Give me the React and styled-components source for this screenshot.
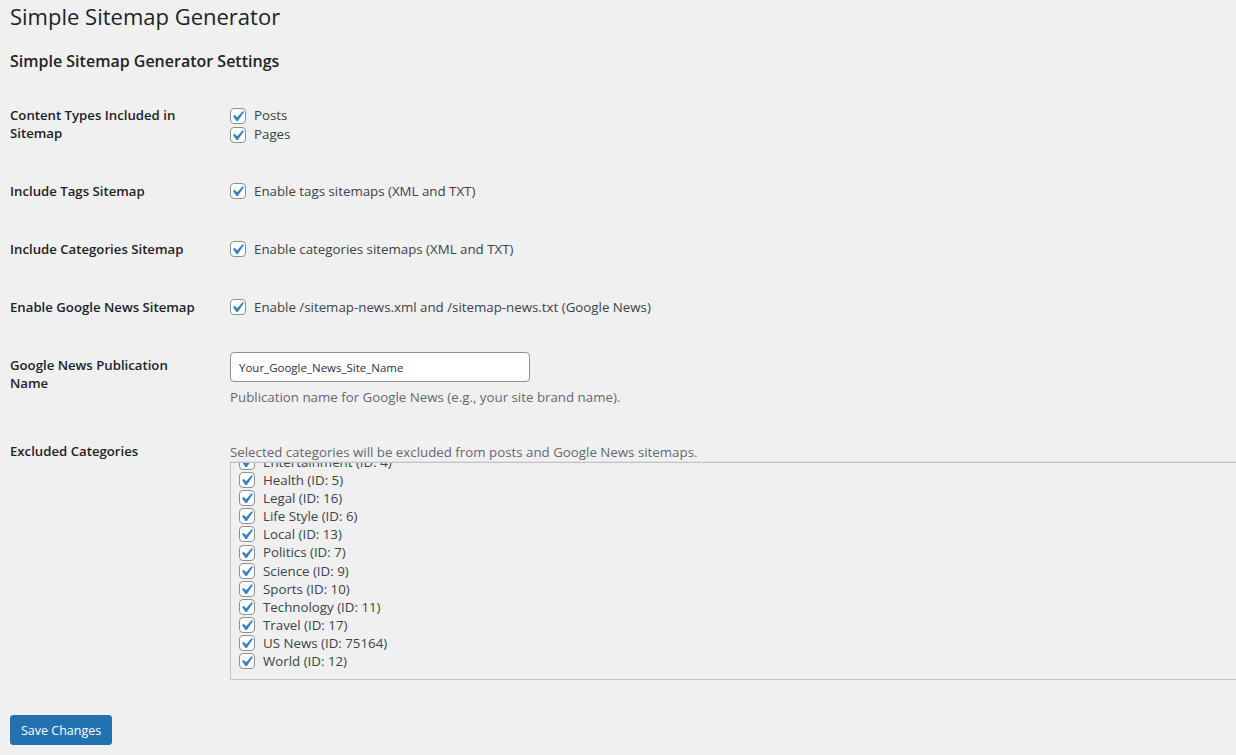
import React, { useEffect, useRef } from 'react';
import styled, { createGlobalStyle } from 'styled-components';

const GlobalStyle = createGlobalStyle`
  html, body {
    margin: 0;
    padding: 0;
    overflow: hidden;
    background: #f0f0f1;
  }
  body {
    font-family: "Open Sans", "Noto Sans", sans-serif;
    font-size: 13px;
    color: #3c434a;
  }
`;

const Wrap = styled.div`
  padding: 0 10px;
`;

const Title = styled.h1`
  margin: 0;
  padding-top: 1px;
  font-size: 22px;
  font-weight: 400;
  line-height: 30px;
  color: #1d2327;
`;

const Subtitle = styled.h2`
  margin: 18px 0 13px;
  font-size: 16px;
  font-weight: 600;
  line-height: 24px;
  color: #1d2327;
`;

const FormTable = styled.table`
  border-collapse: collapse;
  table-layout: fixed;
  width: 100%;
`;

const Th = styled.th`
  width: 195px;
  padding: 20px 15px 20px 0;
  text-align: left;
  vertical-align: top;
  font-size: 13.2px;
  font-weight: 600;
  line-height: 18px;
  color: #1d2327;
`;

const Td = styled.td`
  padding: ${(p) => p.$pad || '20px 10px'};
  vertical-align: top;
  line-height: 18px;
  font-size: 13.3px;
`;

const Choice = styled.label`
  display: flex;
  align-items: center;
  gap: 8px;
  line-height: ${(p) => p.$lh || '18px'};
  color: #3c434a;
  white-space: nowrap;
`;

const Box = styled.span`
  display: inline-flex;
  flex: none;
  width: 16px;
  height: 16px;
  box-sizing: border-box;
  border: 1px solid #8c8f94;
  border-radius: 4px;
  background: #fff;
  overflow: hidden;
`;

const TextInput = styled.input`
  display: block;
  box-sizing: border-box;
  width: 300px;
  height: 30px;
  margin: 1px 0 0;
  padding: 0 8px;
  border: 1px solid #8c8f94;
  border-radius: 4px;
  background: #fff;
  font-family: inherit;
  font-size: 11.5px;
  color: #2c3338;
  outline: none;
`;

const Description = styled.p`
  margin: ${(p) => p.$m || '0'};
  line-height: ${(p) => p.$lh || '18px'};
  color: #646970;
  white-space: nowrap;
`;

const CategoryBox = styled.div`
  box-sizing: border-box;
  width: 1040px;
  height: 218px;
  padding: 0 8px 10px;
  border: 1px solid #c3c4c7;
  box-shadow: 0 -1px 0 #e2e2e4;
  overflow-y: auto;
  scrollbar-width: none;
  &::-webkit-scrollbar {
    display: none;
  }
`;

const Submit = styled.div`
  padding: 15px 0 0;
`;

const Button = styled.button`
  display: block;
  box-sizing: border-box;
  height: 30px;
  padding: 0 10px;
  border: 1px solid #2271b1;
  border-radius: 3px;
  background: #2271b1;
  color: #fff;
  font-family: inherit;
  font-size: 12.5px;
  cursor: pointer;
`;

const Checkbox = () => (
  <Box>
    <svg width="14" height="14" viewBox="3.81 2.86 13.34 13.34">
      <path
        d="M14.83 4.89l1.34.94-5.81 8.38H9.02L5.78 9.67l1.34-1.25 2.57 2.4z"
        fill="#3582c4"
      />
    </svg>
  </Box>
);

const categories = [
  'Entertainment (ID: 4)',
  'Health (ID: 5)',
  'Legal (ID: 16)',
  'Life Style (ID: 6)',
  'Local (ID: 13)',
  'Politics (ID: 7)',
  'Science (ID: 9)',
  'Sports (ID: 10)',
  'Technology (ID: 11)',
  'Travel (ID: 17)',
  'US News (ID: 75164)',
  'World (ID: 12)',
];

const CheckRow = ({ label }) => (
  <Td>
    <Choice>
      <Checkbox />
      {label}
    </Choice>
  </Td>
);

export default function App() {
  const listRef = useRef(null);

  useEffect(() => {
    if (listRef.current) listRef.current.scrollTop = 10;
  }, []);

  return (
    <Wrap>
      <GlobalStyle />
      <Title>Simple Sitemap Generator</Title>
      <Subtitle>Simple Sitemap Generator Settings</Subtitle>
      <FormTable>
        <tbody>
          <tr>
            <Th>Content Types Included in Sitemap</Th>
            <Td $pad="20px 10px 18px">
              <Choice $lh="19px">
                <Checkbox />
                Posts
              </Choice>
              <Choice $lh="19px">
                <Checkbox />
                Pages
              </Choice>
            </Td>
          </tr>
          <tr>
            <Th>Include Tags Sitemap</Th>
            <CheckRow label="Enable tags sitemaps (XML and TXT)" />
          </tr>
          <tr>
            <Th>Include Categories Sitemap</Th>
            <CheckRow label="Enable categories sitemaps (XML and TXT)" />
          </tr>
          <tr>
            <Th>Enable Google News Sitemap</Th>
            <CheckRow label="Enable /sitemap-news.xml and /sitemap-news.txt (Google News)" />
          </tr>
          <tr>
            <Th>Google News Publication Name</Th>
            <Td $pad="15px 10px 16px">
              <TextInput defaultValue="Your_Google_News_Site_Name" />
              <Description $m="6px 0 0">
                Publication name for Google News (e.g., your site brand name).
              </Description>
            </Td>
          </tr>
          <tr>
            <Th>Excluded Categories</Th>
            <Td $pad="20px 0 20px 10px">
              <Description $lh="20px">
                Selected categories will be excluded from posts and Google News sitemaps.
              </Description>
              <CategoryBox ref={listRef}>
                {categories.map((c) => (
                  <Choice key={c} $lh="18.1px">
                    <Checkbox />
                    {c}
                  </Choice>
                ))}
              </CategoryBox>
            </Td>
          </tr>
        </tbody>
      </FormTable>
      <Submit>
        <Button>Save Changes</Button>
      </Submit>
    </Wrap>
  );
}
